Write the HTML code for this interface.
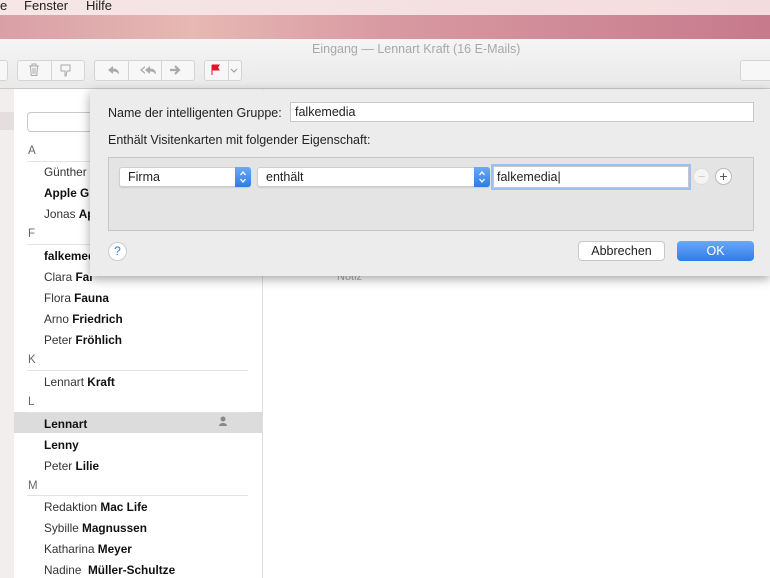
<!DOCTYPE html>
<html><head><meta charset="utf-8"><style>
*{margin:0;padding:0;box-sizing:border-box}
body{width:770px;height:578px;overflow:hidden;position:relative;background:#fff;font-family:"Liberation Sans",sans-serif;font-size:11px;color:#222}
.a{position:absolute}
.menu{left:0;top:0;width:770px;height:15px;background:linear-gradient(90deg,#f6e6e6,#f3dcdd);font-size:13px;color:#222}
.desk{left:0;top:15px;width:770px;height:24px;background:linear-gradient(90deg,#d9a0a6 0%,#e7b8b4 25%,#d89aa2 50%,#c67a8c 100%)}
.win{left:0;top:39px;width:770px;height:50px;background:linear-gradient(#f5f5f5,#e9e9e9);border-bottom:1px solid #c9c9c9}
.btn{top:60px;height:21px;border:1px solid #d4d4d4;border-radius:3px;background:#f7f7f7}
.strip{left:0;top:89px;width:14px;height:489px;background:#f3eeee}
.row{left:44px;font-size:11.8px;color:#333}
.row b{color:#111}
.hd{left:28px;font-size:11.5px;color:#666}
.ln{left:27px;width:221px;height:1px;background:#e3e3e3}
.dlg{left:90px;top:90px;width:680px;height:186px;background:#ececec;box-shadow:0 3px 10px rgba(0,0,0,.35);font-size:12.5px}
.inp{background:#fff;border:1px solid #c8c8c8}
.pop{background:#fff;border:1px solid #cfcfcf;border-radius:3px;height:20px;box-shadow:0 1px 1px rgba(0,0,0,.1)}
.arr{position:absolute;right:-1px;top:-1px;width:16px;height:20px;border-radius:0 3px 3px 0;background:linear-gradient(#6aa9f5,#2f7ae6)}
</style></head><body>
<div class="a menu"><span class="a" style="left:0;top:-2px">e</span><span class="a" style="left:24px;top:-2px">Fenster</span><span class="a" style="left:86px;top:-2px">Hilfe</span></div>
<div class="a desk"></div>
<div class="a win"><div class="a" style="left:312px;top:3px;font-size:12.5px;color:#a8a8a8">Eingang — Lennart Kraft (16 E-Mails)</div></div>
<div class="a btn" style="left:-4px;width:12px"></div>
<div class="a btn" style="left:17px;width:68px"></div><div class="a" style="left:51px;top:61px;width:1px;height:19px;background:#d4d4d4"></div>
<svg class="a" style="left:28px;top:63px" width="12" height="14"><path d="M1 3h10M4 3V1h4v2M2.5 3.5l.7 9h5.6l.7-9M5 5v6M7 5v6" stroke="#aaa" fill="none"/></svg>
<svg class="a" style="left:60px;top:64px" width="15" height="13"><path d="M1 1h9v6H7l-1 5H5V7H1z" stroke="#aaa" fill="none"/></svg>
<div class="a btn" style="left:94px;width:101px"></div><div class="a" style="left:128px;top:61px;width:1px;height:19px;background:#d4d4d4"></div><div class="a" style="left:161px;top:61px;width:1px;height:19px;background:#d4d4d4"></div>
<svg class="a" style="left:104px;top:63px" width="90" height="14"><path d="M4 7l5-4v2.5c4 0 6 2 6 6-1.5-2-3-3-6-3V11z" fill="#aaa"/><path d="M41 7l5-4v2.5c4 0 6 2 6 6-1.5-2-3-3-6-3V11zM36 7l5-4v1.5L38 7l3 2.5V11z" fill="#aaa"/><path d="M66 7h9M71 3l4 4-4 4" stroke="#aaa" stroke-width="2.2" fill="none"/></svg>
<div class="a btn" style="left:204px;width:38px"></div><div class="a" style="left:228px;top:61px;width:1px;height:19px;background:#d4d4d4"></div>
<svg class="a" style="left:210px;top:64px" width="30" height="13"><path d="M2 1v10M2 1h7l-1.5 2.5L9 6H2" fill="#e0142a" stroke="#e0142a"/><path d="M21 5l3 3 3-3" stroke="#999" fill="none"/></svg>
<div class="a btn" style="left:740px;width:40px"></div>
<div class="a strip"></div><div class="a" style="left:0;top:112px;width:14px;height:18px;background:#e6dede"></div>
<div class="a" style="left:262px;top:89px;width:1px;height:489px;background:#dedede"></div>
<div class="a inp" style="left:27px;top:112px;width:80px;height:20px;border-radius:4px"></div>
<div class="a" style="left:14px;top:412px;width:248px;height:21px;background:#dcdcdc"></div>
<svg class="a" style="left:218px;top:416px" width="10" height="11"><circle cx="5" cy="3" r="2.5" fill="#888"/><path d="M1 10c0-4 8-4 8 0z" fill="#888"/></svg>
<div class="a hd" style="top:145px">A</div><div class="a ln" style="top:161px"></div>
<div class="a row" style="top:165px">Günther</div>
<div class="a row" style="top:186px"><b>Apple Gr</b></div>
<div class="a row" style="top:207px">Jonas <b>Ap</b></div>
<div class="a hd" style="top:228px">F</div><div class="a ln" style="top:244px"></div>
<div class="a row" style="top:249px"><b>falkemed</b></div>
<div class="a row" style="top:270px">Clara <b>Fal</b></div>
<div class="a row" style="top:291px">Flora <b>Fauna</b></div>
<div class="a row" style="top:312px">Arno <b>Friedrich</b></div>
<div class="a row" style="top:333px">Peter <b>Fröhlich</b></div>
<div class="a hd" style="top:354px">K</div><div class="a ln" style="top:370px"></div>
<div class="a row" style="top:375px">Lennart <b>Kraft</b></div>
<div class="a hd" style="top:396px">L</div><div class="a ln" style="top:412px"></div>
<div class="a row" style="top:417px"><b>Lennart</b></div>
<div class="a row" style="top:438px"><b>Lenny</b></div>
<div class="a row" style="top:459px">Peter <b>Lilie</b></div>
<div class="a hd" style="top:480px">M</div><div class="a ln" style="top:495px"></div>
<div class="a row" style="top:500px">Redaktion <b>Mac Life</b></div>
<div class="a row" style="top:521px">Sybille <b>Magnussen</b></div>
<div class="a row" style="top:542px">Katharina <b>Meyer</b></div>
<div class="a row" style="top:563px">Nadine &nbsp;<b>Müller-Schultze</b></div>
<div class="a" style="left:337px;top:271px;color:#aaa">Notiz</div>
<div class="a dlg">
 <div class="a" style="left:18px;top:16px">Name der intelligenten Gruppe:</div>
 <div class="a inp" style="left:200px;top:12px;width:464px;height:20px;padding:2px 4px">falkemedia</div>
 <div class="a" style="left:18px;top:43px">Enthält Visitenkarten mit folgender Eigenschaft:</div>
 <div class="a" style="left:18px;top:67px;width:646px;height:74px;background:#e4e4e4;border:1px solid #c6c6c6"></div>
 <div class="a pop" style="left:29px;top:77px;width:132px;padding:2px 8px">Firma<div class="arr"><svg width="16" height="20"><path d="M5.5 8l2.5-3 2.5 3M5.5 12l2.5 3 2.5-3" stroke="#fff" stroke-width="1.3" fill="none"/></svg></div></div>
 <div class="a pop" style="left:167px;top:77px;width:233px;padding:2px 8px">enthält<div class="arr"><svg width="16" height="20"><path d="M5.5 8l2.5-3 2.5 3M5.5 12l2.5 3 2.5-3" stroke="#fff" stroke-width="1.3" fill="none"/></svg></div></div>
 <div class="a inp" style="left:403px;top:76px;width:196px;height:22px;padding:3px 3px;box-shadow:0 0 0 2px #9cc0f2">falkemedia|</div>
 <div class="a" style="left:603px;top:78px;width:17px;height:17px;border:1px solid #ddd;border-radius:50%;background:#f4f4f4;color:#ccc;text-align:center;line-height:15px;font-size:13px">−</div>
 <div class="a" style="left:625px;top:78px;width:17px;height:17px;border:1px solid #bbb;border-radius:50%;background:#fff;color:#555;text-align:center;line-height:15px;font-size:14px">+</div>
 <div class="a" style="left:18px;top:152px;width:19px;height:19px;border:1px solid #ccc;border-radius:50%;background:#fff;color:#3b7de0;text-align:center;line-height:17px;font-size:12px">?</div>
 <div class="a" style="left:488px;top:151px;width:87px;height:20px;background:#fff;border:1px solid #c8c8c8;border-radius:4px;text-align:center;line-height:18px;font-size:12.5px">Abbrechen</div>
 <div class="a" style="left:587px;top:151px;width:77px;height:20px;background:linear-gradient(#69a8f7,#2f7ce8);border-radius:4px;text-align:center;line-height:20px;font-size:12.5px;color:#fff">OK</div>
</div>
</body></html>
